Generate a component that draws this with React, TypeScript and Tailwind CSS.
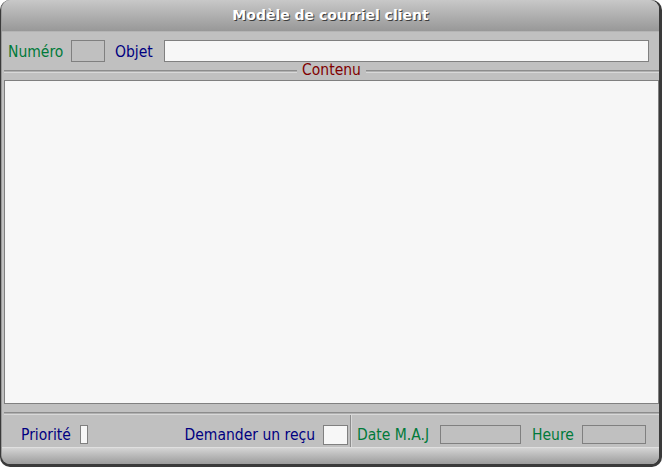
import React from "react";

// Fiche "Modèle de courriel client" - fenêtre style WinDev
const font = { fontFamily: '"DejaVu Sans Condensed", "DejaVu Sans", sans-serif' };

function Field({ className }: { className: string }) {
  return <div className={`border border-[#808080] shrink-0 ${className}`} />;
}

export default function App() {
  return (
    <div className="w-[662px] h-[467px] bg-white" style={font}>
      <div className="w-[662px] h-[467px] rounded-[10px] bg-[#3a3a3a] pl-[1px] pr-[3px] pb-[3px] flex flex-col">
        <div className="flex-1 flex flex-col rounded-[9px] rounded-br-[8px] overflow-hidden bg-[#c0c0c0] border-l border-[#9a9a9a]">
          {/* Title bar */}
          <div className="h-[32px] shrink-0 bg-gradient-to-b from-[#c8c8c8] to-[#989898] flex items-center justify-center border-b border-[#b4b4b4]">
            <span className="text-white font-bold text-[14px] [text-shadow:1px_1px_0_#3c3c3c]" style={{ fontFamily: '"DejaVu Sans", sans-serif' }}>
              Modèle de courriel client
            </span>
          </div>

          {/* Row 1 */}
          <div className="flex items-center h-[22px] mt-[8px] pl-[6px] pr-[10px] text-[15.5px]">
            <span className="w-[63px] mt-[4px] text-[#007a3a]">Numéro</span>
            <Field className="w-[34px] h-[22px] bg-[#c0c0c0]" />
            <span className="ml-[10px] mt-[4px] w-[49px] text-[#000080]">Objet</span>
            <Field className="flex-1 h-[22px] bg-[#f7f7f7]" />
          </div>

          {/* Contenu separator */}
          <div className="flex items-center h-[18px] pl-[2px] text-[15.5px]">
            <div className="flex-1 h-[3px] border-t border-[#8c8c8c] bg-[#b0b0b0] border-b border-b-[#d8d8d8]" />
            <span className="px-[5px] text-[#800000] leading-none">Contenu</span>
            <div className="flex-1 h-[3px] border-t border-[#8c8c8c] bg-[#b0b0b0] border-b border-b-[#d8d8d8]" />
          </div>

          {/* Text area */}
          <div className="ml-[2px] h-[324px] border border-[#808080] bg-[#f7f7f7]" />

          {/* Separator */}
          <div className="mt-[8px] ml-[2px] h-[3px] border-t border-[#8c8c8c] bg-[#b0b0b0] border-b border-b-[#d8d8d8]" />

          {/* Bottom row */}
          <div className="flex h-[32px] text-[15.5px] pl-[2px]">
            <div className="w-[346px] flex items-center pt-[7px]">
              <span className="ml-[17px] mt-[3px] w-[59px] text-[#000080]">Priorité</span>
              <Field className="w-[8px] h-[19px] bg-[#f7f7f7]" />
              <span className="ml-auto mt-[3px] text-[#000080]">Demander un reçu</span>
              <Field className="ml-[8px] mr-[2px] w-[25px] h-[20px] bg-[#f7f7f7]" />
            </div>
            <div className="w-[2px] h-full border-l border-[#8c8c8c] bg-[#d8d8d8]" />
            <div className="flex-1 flex items-center pt-[7px]">
              <span className="ml-[5px] mt-[3px] w-[83px] text-[#007a3a]">Date M.A.J</span>
              <Field className="w-[81px] h-[19px] bg-[#c0c0c0]" />
              <span className="ml-[11px] mt-[3px] w-[50px] text-[#007a3a]">Heure</span>
              <Field className="w-[64px] h-[19px] bg-[#c0c0c0]" />
            </div>
          </div>

          {/* Bottom band */}
          <div className="flex-1 bg-gradient-to-b from-[#d4d4d4] to-[#9c9c9c] border-t border-[#e0e0e0]" />
        </div>
      </div>
    </div>
  );
}
